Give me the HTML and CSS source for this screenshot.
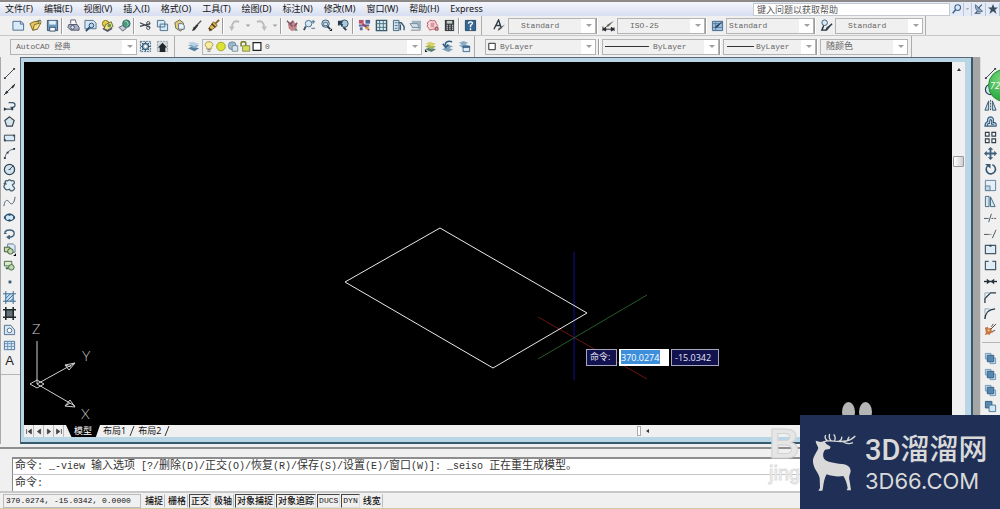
FILE: index.html
```html
<!DOCTYPE html>
<html lang="zh-CN">
<head>
<meta charset="utf-8">
<title>AutoCAD</title>
<link rel="stylesheet" href="styles.css">
</head>
<body>
<svg class="sprite" aria-hidden="true">
  <symbol id="new" viewBox="0 0 14 14"><path d="M1 2.500h8.500l3 2.500v7h-11.500z" fill="#d9eafa" stroke="#47688c"/><path d="M9 2.500v3h3" fill="none" stroke="#47688c"/></symbol>
  <symbol id="open" viewBox="0 0 14 14"><path d="M1 5l4-2 6-1-2 9-5 1z" fill="#e9c65b" stroke="#7a6428"/><path d="M4 12l2-6 7-2-4 7z" fill="#f6df8c" stroke="#7a6428"/><path d="M8 3l4-2 1 2" fill="none" stroke="#4c6b3c"/></symbol>
  <symbol id="save" viewBox="0 0 14 14"><path d="M1.500 1.500h11v11h-11z" fill="#6c9cc0" stroke="#36536e"/><path d="M3.500 2h7v4h-7z" fill="#e6eef5"/><path d="M4 9h6v4H4z" fill="#fff" stroke="#36536e"/></symbol>
  <symbol id="print" viewBox="0 0 14 14"><path d="M4 5V1h5l1 4" fill="#fff" stroke="#555b70"/><path d="M2 6h9l2 3v3H4L1 9z" fill="#aab2c4" stroke="#494f66"/><circle cx="6" cy="9" r="2" fill="#dfe4ee" stroke="#494f66"/></symbol>
  <symbol id="preview" viewBox="0 0 14 14"><path d="M1 1.500h9l3 3v6H1z" fill="#d5e5f2" stroke="#4e7191"/><circle cx="8" cy="7" r="2.500" fill="#b9d8ee" stroke="#274a6a"/><path d="M6 9l-4 4" stroke="#274a6a" stroke-width="2"/></symbol>
  <symbol id="publish" viewBox="0 0 14 14"><circle cx="5" cy="5" r="3.500" fill="#e7cd48" stroke="#7b6d21"/><path d="M5 6l6-3 2 5-6 4-4-1z" fill="#f0e189" stroke="#6c6427"/><circle cx="9" cy="7" r="2" fill="#6a9a4a"/><path d="M2 10l5 3 5-3" stroke="#505470" fill="none" stroke-width="1.500"/></symbol>
  <symbol id="globe" viewBox="0 0 14 14"><circle cx="9" cy="5" r="4" fill="#4a9a80" stroke="#2c6270"/><path d="M7 2l3 1 1 3-2 2" stroke="#a6dca0" fill="none"/><path d="M1 9l4-2 4 3-4 3z" fill="#c5cdd8" stroke="#56606e"/></symbol>
  <symbol id="cut" viewBox="0 0 14 14"><path d="M1 4l11 5M1 8l11-3" stroke="#3f4650" stroke-width="1.300"/><circle cx="10" cy="4.500" r="1.800" fill="none" stroke="#3f4650"/><circle cx="10" cy="9.500" r="1.800" fill="none" stroke="#3f4650"/></symbol>
  <symbol id="copy" viewBox="0 0 14 14"><path d="M1.500 1.500h7l1 1v6h-8zM4.500 5.500h8v7h-8z" fill="#d4e8f7" stroke="#486d8d"/></symbol>
  <symbol id="paste" viewBox="0 0 14 14"><path d="M2 4l5-3 4 3 1 6-4 3-5-3z" fill="#e4cd7d" stroke="#6b6848"/><path d="M6 5h4l2 2v4H6z" fill="#eff6fb" stroke="#547391"/></symbol>
  <symbol id="brush" viewBox="0 0 14 14"><path d="M12 2L6 8" stroke="#555" stroke-width="1.500"/><path d="M8 6l1 1-4 5-3 1 2-4z" fill="#343434"/></symbol>
  <symbol id="paint" viewBox="0 0 14 14"><path d="M13 1L9 5" stroke="#8a5c20" stroke-width="2"/><path d="M7 3l4 4-5 4-3 2-1-3z" fill="#e2b848" stroke="#775923"/><path d="M5 5l4 4M2 10l3 2" stroke="#3d3a35" stroke-width="1.500"/></symbol>
  <symbol id="undo" viewBox="0 0 14 14"><path d="M12 3C7 1 4 4 4 10" fill="none" stroke="#b8bbc0" stroke-width="2"/><path d="M1 8h6l-3 5z" fill="#b8bbc0"/></symbol>
  <symbol id="redo" viewBox="0 0 14 14"><path d="M2 3c5-2 8 1 8 7" fill="none" stroke="#b8bbc0" stroke-width="2"/><path d="M7 8h6l-3 5z" fill="#b8bbc0"/></symbol>
  <symbol id="caret" viewBox="0 0 8 14"><path d="M1.500 6h5L4 8.500z" fill="#9da2aa"/></symbol>
  <symbol id="pan" viewBox="0 0 14 14"><path d="M2 5l5-3 5 4-1 6-5 1-3-3z" fill="#c3848a"/><path d="M1 2l6 6M8 2l-3 3M12 4L9 8" stroke="#7b5362" stroke-width="1.500"/><path d="M10 10l3 2-3 1z" fill="#458c74"/></symbol>
  <symbol id="zoomrt" viewBox="0 0 14 14"><circle cx="6" cy="5" r="3.500" fill="#d3eaf6" stroke="#466d83"/><path d="M3 8l-2 4" stroke="#365169" stroke-width="2"/><path d="M11 1v4M9 3h4M9 10h4" stroke="#3b6a88"/></symbol>
  <symbol id="zoomwin" viewBox="0 0 14 14"><circle cx="6" cy="5" r="4" fill="#b8d1e2" stroke="#3c5c75"/><path d="M4 4h4v3H4z" fill="#eaf2f7" stroke="#54738a"/><path d="M8 8l3 3" stroke="#27394b" stroke-width="2"/><path d="M13 10v3h-3z" fill="#222"/></symbol>
  <symbol id="zoomprev" viewBox="0 0 14 14"><circle cx="8" cy="5" r="4" fill="#a9c9dd" stroke="#334f65"/><path d="M6 7L2 3M2 7V3h4M7 9l3 3" fill="none" stroke="#273d4f" stroke-width="2"/></symbol>
  <symbol id="props" viewBox="0 0 14 14"><path d="M1 1h5v4H1z" fill="#ba5369"/><path d="M8 1h5v4H8z" fill="#4f67a0"/><path d="M1 6h11v2H1zM2 9h3v3H2z" fill="#5969a0"/><path d="M5 5l7 7" stroke="#a64256" stroke-width="2"/><path d="M8 10h4" stroke="#d2af4e" stroke-width="2"/></symbol>
  <symbol id="dcenter" viewBox="0 0 14 14"><path d="M1.500 1.500h11v11h-11z" fill="#d6e8ee" stroke="#3b5b6a" stroke-width="1.500"/><path d="M5 2v10M9 2v10M2 5h10M2 9h10" stroke="#477080"/></symbol>
  <symbol id="palette" viewBox="0 0 14 14"><path d="M1.500 1.500h6v11h-6z" fill="#d2e4f0" stroke="#41647f"/><path d="M3 4h3M3 7h3M3 10h3" stroke="#456c8a"/><path d="M7 4h3l3 4v4M9 6v6" fill="none" stroke="#365977" stroke-width="1.500"/></symbol>
  <symbol id="sheet" viewBox="0 0 14 14"><path d="M3 2h10v10L9 10H3z" fill="#9fb3c0"/><path d="M1 5h8l2 4H4z" fill="#d7e3ea" stroke="#718d9e"/><path d="M2 12h10" stroke="#6f828f"/></symbol>
  <symbol id="markup" viewBox="0 0 14 14"><path d="M3 3q1-3 4-1 4-1 4 3 3 2 0 4-1 3-4 2-4 2-4-1Q0 8 2 6 0 4 3 3z" fill="#f7dadd" stroke="#b94c5c"/><path d="M5 4h4v5H5z" fill="#d995a0"/><path d="M10 9h3v3h-3z" fill="#d9a6a6" stroke="#924653"/></symbol>
  <symbol id="calc" viewBox="0 0 14 14"><path d="M2 1h10v12H2z" fill="#383b3e"/><path d="M4 2h6v3H4z" fill="#c3c8c9"/><path d="M4 7h1M7 7h1M10 7h1M4 9h1M7 9h1M10 9h1M4 11h1M7 11h1M10 11h1" stroke="#eee" stroke-width="1.500"/></symbol>
  <symbol id="help" viewBox="0 0 14 14"><path d="M1.500 1.500h11v11h-11z" fill="#356993" stroke="#234764"/><path d="M5 5c0-3 5-2 4 0L7 7v2M7 10v2" fill="none" stroke="#fff" stroke-width="1.500"/></symbol>
  <symbol id="gear" viewBox="0 0 14 14"><path d="M1.500 1.500h11v11h-11z" fill="#d7e6ef" stroke="#4c6a82" stroke-dasharray="2 1"/><circle cx="7" cy="7" r="3.500" fill="#8eabc0" stroke="#274b68"/><circle cx="7" cy="7" r="1.500" fill="#fff"/><path d="M7 2v2M7 10v2M2 7h2M10 7h2M3 3l2 2M9 9l2 2M3 11l2-2M9 5l2-2" stroke="#274b68"/></symbol>
  <symbol id="home" viewBox="0 0 14 14"><path d="M1.500 1.500h11v11h-11z" fill="#d3d9dd" stroke="#929ea6" stroke-dasharray="2 1"/><path d="M7 3l5 5h-2v5H4V8H2z" fill="#21262b"/></symbol>
  <symbol id="layers" viewBox="0 0 14 14"><path d="M1 9l5-2 7 2-5 3z" fill="#537f9f"/><path d="M1 6l5-2 7 2-5 3z" fill="#86aeca"/><path d="M1 3l5-1 7 2-5 3z" fill="#b9d3e4"/></symbol>
  <symbol id="layery" viewBox="0 0 14 14"><path d="M1 10l5-2 7 2-5 3z" fill="#587f78"/><path d="M1 7l5-2 7 2-5 3z" fill="#a3b653"/><path d="M2 4l4-2 7 2-5 3z" fill="#d8cf69"/><path d="M1 10l3 3H1z" fill="#222"/></symbol>
  <symbol id="layerprev" viewBox="0 0 14 14"><path d="M1 10l5-2 7 2-5 3zM4 6l4-1 5 2-5 2z" fill="#7a9fba"/><path d="M12 2C7 0 4 3 5 6M2 4l3 4 3-3" fill="none" stroke="#345d86" stroke-width="1.700"/></symbol>
  <symbol id="layerwin" viewBox="0 0 14 14"><path d="M1 3l5-2 5 2-5 3zM1 6l5-2 5 2-5 3z" fill="#8aadc4"/><path d="M5.500 6.500h7v6h-7z" fill="#dcecf7" stroke="#3c688e"/><path d="M5 7.500h8" stroke="#3c688e" stroke-width="2"/></symbol>
  <symbol id="dstyle" viewBox="0 0 14 14"><path d="M1 11L6 1l3 9M3 7h5" fill="none" stroke="#303b45" stroke-width="1.500"/><path d="M13 6l-5 5-3 2 1-3z" fill="#555"/></symbol>
  <symbol id="dimstyle" viewBox="0 0 14 14"><path d="M1 8v5M13 9v4M1 11h12M1 11l3-2v4zM13 11l-3-2v4z" fill="#26282c" stroke="#26282c"/><path d="M13 2L7 8l-3 1 2-3z" fill="#596b51"/></symbol>
  <symbol id="tablestyle" viewBox="0 0 14 14"><path d="M1.500 2.500h11v10h-11z" fill="#9dbfdc" stroke="#41658a"/><path d="M2 5h10M5 3v9M2 9h10" stroke="#527ca0"/><path d="M13 2L7 9l-3 1 2-3z" fill="#243d56"/></symbol>
  <symbol id="mleader" viewBox="0 0 14 14"><circle cx="5" cy="4" r="3" fill="#d8eaf5" stroke="#375873"/><path d="M4 7l-2 5h4l7-7" fill="none" stroke="#26323a" stroke-width="1.500"/><path d="M13 5l-5 7-2 1 1-4z" fill="#33434f"/></symbol>
  <symbol id="bulb" viewBox="0 0 14 14"><path d="M4 8C0 4 3 1 7 1s7 3 3 7v2H4z" fill="#f8eca0" stroke="#9b873d"/><path d="M5 11h4M5 13h4" stroke="#636363"/></symbol>
  <symbol id="sun" viewBox="0 0 14 14"><circle cx="7" cy="7" r="5.500" fill="#dce333" stroke="#8d931d"/></symbol>
  <symbol id="vpsun" viewBox="0 0 14 14"><circle cx="6" cy="6" r="5" fill="#9cbacd" stroke="#5f7e91"/><path d="M6 6h7v7H6z" fill="#d9e6ed" stroke="#657f8c"/></symbol>
  <symbol id="lock" viewBox="0 0 14 14"><path d="M2 7V3c0-3 6-3 6 0v3" fill="none" stroke="#767e34" stroke-width="2"/><path d="M4 6h9v7H4z" fill="#d5dc62" stroke="#757a2a"/></symbol>
  <symbol id="square" viewBox="0 0 14 14"><path d="M2 2h10v10H2z" fill="#fff" stroke="#222" stroke-width="1.500"/></symbol>
  <symbol id="lens" viewBox="0 0 14 14"><circle cx="8" cy="5" r="4" fill="#d6e8f9" stroke="#41648d" stroke-width="1.500"/><path d="M5 8l-4 5" stroke="#41648d" stroke-width="2"/></symbol>
  <symbol id="dish" viewBox="0 0 14 14"><path d="M2 1l10 9c-5 3-11-1-10-9z" fill="#8faac3" stroke="#36506d"/><path d="M6 6l5-5M5 10l-3 3h7" fill="none" stroke="#36506d" stroke-width="1.500"/></symbol>
  <symbol id="star" viewBox="0 0 14 14"><path d="M7 0l2 5h5l-4 3 2 6-5-4-5 4 2-6-4-3h5z" fill="#3b4e60"/></symbol>
  <symbol id="line" viewBox="0 0 14 14"><path d="M2 12L12 2" stroke="#333e48"/><path d="M1 11h2v2H1zM11 1h2v2h-2z" fill="#333e48"/></symbol>
  <symbol id="xline" viewBox="0 0 14 14"><path d="M1 13L13 1" stroke="#26313a"/><path d="M4 8l2 2-3 2-1-1zM10 3l3-2-1 3-2 2-1-1z" fill="#26313a"/></symbol>
  <symbol id="pline" viewBox="0 0 14 14"><path d="M1 11h9M6 4h4c4 0 4 5 0 5H8" fill="none" stroke="#3d5871" stroke-width="1.300"/><path d="M1 9l3 2-3 2zM9 9h2v3H9z" fill="#263947"/></symbol>
  <symbol id="poly" viewBox="0 0 14 14"><path d="M7 2l5 4-2 6H4L2 6z" fill="#d4e5ef" stroke="#39444d" stroke-width="1.300"/></symbol>
  <symbol id="rect" viewBox="0 0 14 14"><path d="M1.500 4.500h11v6h-11z" fill="#d7eaf7" stroke="#37434d"/><path d="M1 9h2v2H1zM11 4h2v2h-2z" fill="#37434d"/></symbol>
  <symbol id="arc" viewBox="0 0 14 14"><path d="M2 12Q3 4 12 2" fill="none" stroke="#4d6579"/><path d="M1 11h2v2H1zM4 5h2v2H4zM11 1h2v2h-2z" fill="#26313a"/></symbol>
  <symbol id="circle" viewBox="0 0 14 14"><circle cx="7" cy="7" r="5.500" fill="#cfe2ed" stroke="#2d4355" stroke-width="1.300"/><path d="M7 7l4-4M6 7h2" stroke="#2d4355"/></symbol>
  <symbol id="cloud" viewBox="0 0 14 14"><path d="M3 5Q1 1 5 2q2-2 4 0 4-1 3 3-3 1-1 3 3 2 0 4-3 2-4-1-4 2-5-1-2-2 0-4-2-2 1-1z" fill="#e3eff5" stroke="#40596c" stroke-width="1.300"/></symbol>
  <symbol id="spline" viewBox="0 0 14 14"><path d="M1 12C2 4 5 5 7 8s5 2 6-6" fill="none" stroke="#40556a"/></symbol>
  <symbol id="ellipse" viewBox="0 0 14 14"><ellipse cx="7" cy="7" rx="5" ry="3.500" fill="#d1e9f7" stroke="#284e6c" stroke-width="1.500"/><path d="M1 7h2M11 7h2M7 3v2M7 9v2" stroke="#284e6c" stroke-width="2"/></symbol>
  <symbol id="earc" viewBox="0 0 14 14"><path d="M2 7C2 2 12 2 12 7c0 3-3 4-6 4" fill="none" stroke="#42627b" stroke-width="1.500"/><path d="M1 7h3M7 9l-3 2 3 2z" fill="#42627b" stroke="#42627b"/></symbol>
  <symbol id="insert" viewBox="0 0 14 14"><path d="M5 1h6l2 2v7H5z" fill="#dcebf4" stroke="#5c7d97"/><path d="M1.500 4.500h6v5h-6z" fill="#c9dcaa" stroke="#35583a"/><circle cx="8" cy="9" r="3" fill="#c3d8a5" stroke="#35583a"/><path d="M14 11v3h-3z"/></symbol>
  <symbol id="block" viewBox="0 0 14 14"><path d="M1.500 2.500h8v5h-8z" fill="#dae9cb" stroke="#3e683f"/><circle cx="9" cy="9" r="3" fill="#bed6ae" stroke="#3e683f"/><path d="M3 10h3" stroke="#3e683f" stroke-width="2"/></symbol>
  <symbol id="point" viewBox="0 0 14 14"><path d="M6 6h3v3H6z" fill="#345674"/></symbol>
  <symbol id="hatch" viewBox="0 0 14 14"><path d="M2 3h10v9H2z" fill="#c5e2f3"/><path d="M3 0v14M11 0v14M0 3h14M0 11h14M3 8l5-5M4 11l7-7M8 11l3-3" stroke="#36668c"/></symbol>
  <symbol id="grad" viewBox="0 0 14 14"><path d="M3 3h8v8H3z" fill="#637279"/><path d="M3 0v14M11 0v14M0 3h14M0 11h14" stroke="#20282c" stroke-width="1.700"/></symbol>
  <symbol id="region" viewBox="0 0 14 14"><path d="M1.500 2.500h7l4 5v5h-11z" fill="#d5e7f3" stroke="#4c6e8b"/><circle cx="7" cy="8" r="2.500" fill="#fff" stroke="#4c6e8b"/></symbol>
  <symbol id="table" viewBox="0 0 14 14"><path d="M1.500 2.500h11v9h-11z" fill="#d8eaf8" stroke="#47719b"/><path d="M2 5h10M2 8h10M5 3v8M9 3v8" stroke="#6a91b4"/></symbol>
  <symbol id="mirror" viewBox="0 0 14 14"><path d="M5 2v10H1zM9 2v10h4z" fill="#c5d9e6" stroke="#34536a"/><path d="M7 1v12" stroke="#34536a" stroke-dasharray="2 1"/></symbol>
  <symbol id="offset" viewBox="0 0 14 14"><path d="M1 12h12q1-4-3-4 1-6-3-6-4 1-3 5-3 1-3 5zM4 12q-1-3 2-3 0-4 1-4 2 0 1 5h3" fill="#c3ddef" stroke="#395e7b" stroke-width="1.200"/></symbol>
  <symbol id="array" viewBox="0 0 14 14"><path d="M1.500 1.500h4v4h-4zM8.500 1.500h4v4h-4zM1.500 8.500h4v4h-4zM8.500 8.500h4v4h-4z" fill="#eef4f8" stroke="#333e47" stroke-width="1.200"/></symbol>
  <symbol id="move" viewBox="0 0 14 14"><path d="M7 0l3 3H8v3h3V4l3 3-3 3V8H8v3h2l-3 3-3-3h2V8H3v2L0 7l3-3v2h3V3H4z" fill="#3f617c"/></symbol>
  <symbol id="rotate" viewBox="0 0 14 14"><path d="M4 3a5 5 0 1 0 5-1" fill="none" stroke="#355675" stroke-width="1.700"/><path d="M1 1h6v5z" fill="#355675"/></symbol>
  <symbol id="scale" viewBox="0 0 14 14"><path d="M1.500 1.500h11v11h-11z" fill="#e4eff7" stroke="#607f99"/><path d="M1.500 7.500h5v5h-5z" fill="#bed7e8" stroke="#607f99"/></symbol>
  <symbol id="stretch" viewBox="0 0 14 14"><path d="M1.500 1.500h4v11h-4zM7 2l5 10.500H7z" fill="#d7e7f2" stroke="#426580"/></symbol>
  <symbol id="trim" viewBox="0 0 14 14"><path d="M0 8h5M5 12l3-9" stroke="#43515b"/><path d="M8 8h6" stroke="#43515b" stroke-dasharray="2 1"/></symbol>
  <symbol id="extend" viewBox="0 0 14 14"><path d="M0 8h5" stroke="#43515b"/><path d="M5 8h4" stroke="#43515b" stroke-dasharray="1 1"/><path d="M9 12l4-9" stroke="#43515b"/></symbol>
  <symbol id="break1" viewBox="0 0 14 14"><path d="M1.500 2.500h11v9h-11z" fill="#e0edf6" stroke="#455a6a" stroke-width="1.300"/><path d="M6 2h2v2H6z" fill="#233b4c"/></symbol>
  <symbol id="break2" viewBox="0 0 14 14"><path d="M5 2.500H1.500v9h11v-9H9" fill="#e0edf6" stroke="#455a6a" stroke-width="1.300"/></symbol>
  <symbol id="join" viewBox="0 0 14 14"><path d="M0 7h14" stroke="#25323b" stroke-width="1.500"/><path d="M3 4l4 3-4 3zM11 4L7 7l4 3z" fill="#25323b"/></symbol>
  <symbol id="chamfer" viewBox="0 0 14 14"><path d="M1 13V8l6-6h6" fill="none" stroke="#283d4e" stroke-width="1.400"/><path d="M1 7V2h5" fill="none" stroke="#82a6c0"/></symbol>
  <symbol id="fillet" viewBox="0 0 14 14"><path d="M1 13Q1 3 12 2" fill="none" stroke="#283d4e" stroke-width="1.500"/><path d="M1 7V2h5" fill="none" stroke="#82a6c0"/></symbol>
  <symbol id="explode" viewBox="0 0 14 14"><path d="M1 5l3-1 1 2 3-1v3l2 2-3 1-1 2-2-1-3 1 1-3z" fill="#c67545"/><path d="M7 7l6-6M9 9l3-1M8 4l2-3" stroke="#513c30"/><path d="M4 7h2v2H4z" fill="#f4d086"/></symbol>
  <symbol id="ordera" viewBox="0 0 14 14"><path d="M1.500 1.500h6v6h-6zM6.500 6.500h6v6h-6z" fill="#c6e0f1" stroke="#6d97b6"/><path d="M3.500 3.500h7v7h-7z" fill="#5787ae" stroke="#345f83"/></symbol>
  <symbol id="orderb" viewBox="0 0 14 14"><path d="M1.500 1.500h7v7h-7z" fill="#5989af" stroke="#355f83"/><path d="M5.500 5.500h7v7h-7z" fill="#cfe6f4" stroke="#4d7798"/></symbol>
</svg>

<div class="app">
  <header class="menubar">
    <nav class="menus" aria-label="菜单">
      <button>文件(F)</button><button>编辑(E)</button><button>视图(V)</button><button>插入(I)</button><button>格式(O)</button><button>工具(T)</button><button>绘图(D)</button><button>标注(N)</button><button>修改(M)</button><button>窗口(W)</button><button>帮助(H)</button><button>Express</button>
    </nav>
    <div class="search">
      <input type="text" aria-label="搜索帮助" placeholder="键入问题以获取帮助">
      <button aria-label="搜索"><svg><use href="#lens"/></svg></button>
      <button class="slim" aria-label="搜索选项"><svg><use href="#caret"/></svg></button>
      <button aria-label="通讯中心"><svg><use href="#dish"/></svg></button>
      <button aria-label="收藏夹"><svg><use href="#star"/></svg></button>
    </div>
  </header>

  <div class="toolrow">
    <div class="toolbar standard">
      <button aria-label="新建"><svg><use href="#new"/></svg></button><button aria-label="打开"><svg><use href="#open"/></svg></button><button aria-label="保存"><svg><use href="#save"/></svg></button>
      <i class="sep"></i>
      <button aria-label="打印"><svg><use href="#print"/></svg></button><button aria-label="打印预览"><svg><use href="#preview"/></svg></button><button aria-label="发布"><svg><use href="#publish"/></svg></button><button aria-label="三维 DWF"><svg><use href="#globe"/></svg></button>
      <i class="sep"></i>
      <button aria-label="剪切"><svg><use href="#cut"/></svg></button><button aria-label="复制"><svg><use href="#copy"/></svg></button><button aria-label="粘贴"><svg><use href="#paste"/></svg></button><button aria-label="特性匹配"><svg><use href="#brush"/></svg></button><button aria-label="块编辑器"><svg><use href="#paint"/></svg></button>
      <i class="sep"></i>
      <button aria-label="放弃"><svg><use href="#undo"/></svg></button><button class="slim" aria-label="放弃列表"><svg><use href="#caret"/></svg></button><button aria-label="重做"><svg><use href="#redo"/></svg></button><button class="slim" aria-label="重做列表"><svg><use href="#caret"/></svg></button>
      <i class="sep"></i>
      <button aria-label="平移"><svg><use href="#pan"/></svg></button><button aria-label="实时缩放"><svg><use href="#zoomrt"/></svg></button><button aria-label="窗口缩放"><svg><use href="#zoomwin"/></svg></button><button aria-label="缩放上一个"><svg><use href="#zoomprev"/></svg></button>
      <i class="sep"></i>
      <button aria-label="特性"><svg><use href="#props"/></svg></button><button aria-label="设计中心"><svg><use href="#dcenter"/></svg></button><button aria-label="工具选项板"><svg><use href="#palette"/></svg></button><button aria-label="图纸集"><svg><use href="#sheet"/></svg></button><button aria-label="标记集"><svg><use href="#markup"/></svg></button><button aria-label="计算器"><svg><use href="#calc"/></svg></button>
      <i class="sep"></i>
      <button aria-label="帮助"><svg><use href="#help"/></svg></button>
    </div>
    <div class="toolbar styles">
      <button aria-label="文字样式"><svg><use href="#dstyle"/></svg></button>
      <span class="combo style-combo"><select aria-label="文字样式"><option>Standard</option></select></span><i class="sep"></i>
      <button aria-label="标注样式"><svg><use href="#dimstyle"/></svg></button>
      <span class="combo style-combo"><select aria-label="标注样式"><option>ISO-25</option></select></span><i class="sep"></i>
      <button aria-label="表格样式"><svg><use href="#tablestyle"/></svg></button>
      <span class="combo style-combo near"><select aria-label="表格样式"><option>Standard</option></select></span><i class="sep"></i>
      <button aria-label="引线样式"><svg><use href="#mleader"/></svg></button>
      <span class="combo style-combo"><select aria-label="引线样式"><option>Standard</option></select></span>
    </div>
  </div>

  <div class="toolrow">
    <div class="toolbar workspace-bar">
      <span class="combo workspace-combo"><select aria-label="工作空间"><option>AutoCAD 经典</option></select></span>
      <button aria-label="工作空间设置"><svg><use href="#gear"/></svg></button><button aria-label="我的工作空间"><svg><use href="#home"/></svg></button>
    </div>
    <div class="toolbar layer-bar">
      <button aria-label="图层特性"><svg><use href="#layers"/></svg></button>
      <span class="combo layer-combo"><span class="lead"><svg><use href="#bulb"/></svg><svg><use href="#sun"/></svg><svg><use href="#vpsun"/></svg><svg><use href="#lock"/></svg><svg><use href="#square"/></svg></span><select aria-label="图层"><option>0</option></select></span>
      <button aria-label="置为当前图层"><svg><use href="#layery"/></svg></button><button aria-label="上一个图层"><svg><use href="#layerprev"/></svg></button><button aria-label="图层状态"><svg><use href="#layerwin"/></svg></button>
    </div>
    <div class="toolbar props-bar">
      <span class="combo color-combo"><span class="lead"><svg><use href="#square"/></svg></span><select aria-label="颜色"><option>ByLayer</option></select></span><i class="sep"></i>
      <span class="combo type-combo"><span class="lead"><i class="rule"></i></span><select aria-label="线型"><option>ByLayer</option></select></span><i class="sep"></i>
      <span class="combo weight-combo"><span class="lead"><i class="rule"></i></span><select aria-label="线宽"><option>ByLayer</option></select></span><i class="sep"></i>
      <span class="combo plot-combo"><select aria-label="打印样式"><option>随颜色</option></select></span>
    </div>
  </div>

  <main class="workspace">
    <aside class="sidebar" aria-label="绘图">
      <button aria-label="直线"><svg><use href="#line"/></svg></button><button aria-label="构造线"><svg><use href="#xline"/></svg></button><button aria-label="多段线"><svg><use href="#pline"/></svg></button><button aria-label="正多边形"><svg><use href="#poly"/></svg></button><button aria-label="矩形"><svg><use href="#rect"/></svg></button><button aria-label="圆弧"><svg><use href="#arc"/></svg></button><button aria-label="圆"><svg><use href="#circle"/></svg></button><button aria-label="修订云线"><svg><use href="#cloud"/></svg></button><button aria-label="样条曲线"><svg><use href="#spline"/></svg></button><button aria-label="椭圆"><svg><use href="#ellipse"/></svg></button><button aria-label="椭圆弧"><svg><use href="#earc"/></svg></button><button aria-label="插入块"><svg><use href="#insert"/></svg></button><button aria-label="创建块"><svg><use href="#block"/></svg></button><button aria-label="点"><svg><use href="#point"/></svg></button><button aria-label="图案填充"><svg><use href="#hatch"/></svg></button><button aria-label="渐变色"><svg><use href="#grad"/></svg></button><button aria-label="面域"><svg><use href="#region"/></svg></button><button aria-label="表格"><svg><use href="#table"/></svg></button><button class="mtext" aria-label="多行文字">A</button>
      <i class="rest"></i>
    </aside>

    <section class="window">
      <div class="view">
        <div class="canvas">
          <svg class="drawing" viewBox="0 0 928 363" fill="none">
            <path d="M550 190v128" stroke="#07074a" stroke-width="2"/>
            <path d="M514 255l109 62" stroke="#6b1414"/>
            <path d="M623 233l-109 64" stroke="#245c2b"/>
            <path d="M416 166l147 85-94 55-148-86z" stroke="#e8e8e8"/>
            <g stroke="#d0d0d0">
              <path d="M13 279v43l38-21M13 322l38 22M6 322l7-4 7 4-7 4z"/>
              <path d="M51 301l-6 7-4-5zM41 303l6 2M51 345l-10-1 5-6zM41 344l5-3"/>
            </g>
            <g class="axis-name"><text x="8" y="272">Z</text><text x="58" y="299">Y</text><text x="57" y="357">X</text></g>
          </svg>
          <div class="dynamic">
            <label for="dyn-x">命令:</label>
            <span class="field"><input id="dyn-x" type="text" value="370.0274"></span>
            <input class="second" aria-label="Y" type="text" value="-15.0342">
          </div>
        </div>
        <div class="vscroll"><button aria-label="向上滚动"></button><i class="thumb"></i></div>
      </div>
      <div class="tabs">
        <div class="pager">
          <button aria-label="第一个"><svg viewBox="0 0 10 10"><path d="M2 2v6M8 2L4 5l4 3z"/></svg></button><button aria-label="上一个"><svg viewBox="0 0 10 10"><path d="M7 2L3 5l4 3z"/></svg></button><button aria-label="下一个"><svg viewBox="0 0 10 10"><path d="M3 2l4 3-4 3z"/></svg></button><button aria-label="最后一个"><svg viewBox="0 0 10 10"><path d="M8 2v6M2 2l4 3-4 3z"/></svg></button>
        </div>
        <button class="tab current">模型</button>
        <button class="tab">布局1</button><svg class="slash" viewBox="0 0 6 12"><path d="M5 1L1 11"/></svg>
        <button class="tab">布局2</button><svg class="slash" viewBox="0 0 6 12"><path d="M5 1L1 11"/></svg>
        <div class="hscroll"><i class="split"></i><button aria-label="向左滚动"></button></div>
      </div>
    </section>

    <aside class="sidebar modify" aria-label="修改">
      <button aria-label="删除"><svg><use href="#line"/></svg></button><button aria-label="复制对象"><svg><use href="#circle"/></svg></button><button aria-label="镜像"><svg><use href="#mirror"/></svg></button><button aria-label="偏移"><svg><use href="#offset"/></svg></button><button aria-label="阵列"><svg><use href="#array"/></svg></button><button aria-label="移动"><svg><use href="#move"/></svg></button><button aria-label="旋转"><svg><use href="#rotate"/></svg></button><button aria-label="缩放"><svg><use href="#scale"/></svg></button><button aria-label="拉伸"><svg><use href="#stretch"/></svg></button><button aria-label="修剪"><svg><use href="#trim"/></svg></button><button aria-label="延伸"><svg><use href="#extend"/></svg></button><button aria-label="打断于点"><svg><use href="#break1"/></svg></button><button aria-label="打断"><svg><use href="#break2"/></svg></button><button aria-label="合并"><svg><use href="#join"/></svg></button><button aria-label="倒角"><svg><use href="#chamfer"/></svg></button><button aria-label="圆角"><svg><use href="#fillet"/></svg></button><button aria-label="分解"><svg><use href="#explode"/></svg></button>
      <i class="divider"></i>
      <button aria-label="前置"><svg><use href="#ordera"/></svg></button><button aria-label="后置"><svg><use href="#ordera"/></svg></button><button aria-label="置于对象之上"><svg><use href="#ordera"/></svg></button><button aria-label="置于对象之下"><svg><use href="#orderb"/></svg></button>
      <span class="badge">72</span>
    </aside>
  </main>

  <section class="command">
    <div class="log"><span>命令</span>: _-view <span>输入选项</span> [?/<span>删除</span>(D)/<span>正交</span>(O)/<span>恢复</span>(R)/<span>保存</span>(S)/<span>设置</span>(E)/<span>窗口</span>(W)]: _seiso <span>正在重生成模型。</span></div>
    <div class="prompt"><label for="cmd"><span>命令</span>:</label><input id="cmd" type="text"></div>
  </section>

  <footer class="status">
    <output>370.0274, -15.0342, 0.0000</output>
    <button>捕捉</button><button>栅格</button><button class="on">正交</button><button>极轴</button><button class="on">对象捕捉</button><button class="on">对象追踪</button><button class="on latin">DUCS</button><button class="on latin">DYN</button><button>线宽</button>
  </footer>

  <div class="watermark"><i class="paw"></i><i class="paw"></i><b>B</b><span>jing</span></div>
  <div class="brand">
    <svg viewBox="575 125 135 178"><path fill="#d9d9d9" d="M586 150l14 4 12-2 6 8 13 8-3 7-14 2c-6 8-8 19-2 28 8 10 28 12 53 15 17 2 26 9 26 22-2 10-7 16-3 30l4 27h-13l3-7c-2-12-6-26-13-36-15 3-34 1-50-5-7 12-9 25-11 40l-2 9h-12l5-8-1-30c-4-17-18-27-20-47-2-17 12-30 16-43-2-8-8-14-8-22z"/><path fill="none" stroke="#d9d9d9" stroke-width="4" d="M609 154c16-10 42 3 69-3 12-2 20-8 27-15M621 150q-10-7-5-17M632 150q-8-8-4-20M642 151q6-10-2-20M653 153q13-4 11-15M669 153q12 10 29 3M683 150q-2-6 4-12"/></svg>
    <div><strong>3D溜溜网</strong><span>3D66.COM</span></div>
  </div>
</div>
</body>
</html>
```
FILE: styles.css
```css
* { box-sizing: border-box; }
body {
  margin: 0;
  background: #f1f0f0;
  color: #222;
  font: 9px/12px "Noto Sans", "Noto Sans CJK SC", sans-serif;
}
button, input, select { font: inherit; color: inherit; margin: 0; padding: 0; border: 0; background: none; }
button { display: flex; align-items: center; justify-content: center; flex: none; }
i { display: block; flex: none; }
.sprite { position: absolute; width: 0; height: 0; }
.app { position: relative; display: flex; flex-direction: column; min-height: 100vh; overflow: hidden; }

.menubar { display: flex; justify-content: space-between; height: 16px; border-top: 2px solid #8d8989; background: linear-gradient(#f4f6fc, #d7def0); }
.menus { display: flex; gap: 11px; padding-left: 5px; color: #151515; }
.search { display: flex; align-items: center; background: #e4ebf6; }
.search input { width: 197px; height: 13px; padding-left: 3px; border: 1px solid #c4c8cf; background: #fff; }
.search input::placeholder { color: #555; opacity: 1; }
.search button { width: 14px; height: 13px; border-right: 1px solid #b9c4d6; }
.search .slim { width: 8px; }
.search svg { width: 10px; height: 10px; }

.toolrow { display: flex; height: 20px; border-bottom: 1px solid #c6c6c6; background: #f1f0f0; }
.toolrow + .toolrow { height: 21px; border-bottom: 0; }
.toolbar { display: flex; align-items: center; border-right: 1px solid #adadad; }
.toolbar button { width: 17px; height: 18px; }
.toolbar svg { width: 13px; height: 13px; }
.toolbar .slim { width: 10px; }
.toolbar .slim svg { width: 8px; }
.standard { padding: 0 2px 0 10px; }
.sep { width: 4px; height: 16px; border-left: 1px solid #9c9c9c; background: linear-gradient(90deg, #fff 1px, transparent 1px); }
.styles { padding: 0 2px 0 9px; }

.combo { display: grid; grid-template-columns: auto 1fr 13px; align-items: center; flex: none; height: 16px; border: 1px solid #b4b4b4; background: linear-gradient(#fff, #fff) right / 14px 100% no-repeat #f1f0f0; }
.combo select { grid-area: 1 / 1 / 2 / 4; width: 100%; height: 14px; appearance: none; border-radius: 0; color: #666; font: 8px/12px "Liberation Mono", "Noto Sans CJK SC", monospace; }
.combo::after { content: ""; grid-area: 1 / 3; justify-self: center; border: 3px solid transparent; border-top-color: #a0a0a0; border-bottom: 0; pointer-events: none; }
.lead { grid-area: 1 / 1; display: flex; align-items: center; pointer-events: none; }
.rule { height: 1px; background: #333; }
.style-combo { width: 88px; }
.style-combo select { padding-left: 12px; }
.near select { padding-left: 2px; }
.workspace-bar { padding: 0 3px 0 10px; }
.workspace-combo { width: 127px; }
.workspace-combo select { padding-left: 5px; }
.layer-bar { padding: 0 1px 0 10px; }
.layer-combo { width: 220px; }
.layer-combo select { padding-left: 62px; }
.toolbar .layer-combo svg { width: 12px; height: 11px; }
.props-bar { padding: 0 3px 0 10px; }
.color-combo { width: 111px; margin-right: 2px; }
.color-combo select { padding-left: 14px; }
.toolbar .color-combo svg { width: 12px; height: 9px; }
.type-combo { width: 117px; }
.type-combo .rule { width: 44px; margin-left: 2px; }
.type-combo select { padding-left: 50px; }
.weight-combo { width: 93px; }
.weight-combo .rule { width: 27px; margin-left: 3px; }
.weight-combo select { padding-left: 32px; }
.plot-combo { width: 88px; }
.plot-combo select { padding-left: 5px; font-size: 9px; }

.workspace { display: flex; flex: 1; min-height: 0; background: #a5a5a5; }
.sidebar { position: relative; display: flex; flex-direction: column; flex: none; width: 20px; padding-top: 8px; border-left: 1px solid #aaa; background: #f1f0f0; }
.sidebar button { width: 17px; height: 16px; }
.sidebar svg { width: 13px; height: 13px; }
.sidebar .mtext { font: 13px/16px "Liberation Sans", sans-serif; }
.rest { margin-top: 5px; border-top: 1px solid #b5b5b5; flex: 1; }
.modify { padding: 8px 0 0 1px; border-left: 1px solid #ddd; }
.divider { height: 1px; margin: 5px 0 7px; background: #b5b5b5; }
.badge { position: absolute; top: 12px; left: 7px; width: 33px; height: 33px; padding: 10px 0 0 1px; border: 1px solid #278a35; border-radius: 50%; background: radial-gradient(circle at 40% 30%, #7ad77c, #2fae46 65%); color: #fff; font: italic 9px/12px "Open Sans", sans-serif; }

.window { display: flex; flex-direction: column; flex: 1; min-width: 0; margin-right: 7px; border: solid #5a6875; border-width: 1px 2px 2px 1px; border-right-color: #38586b; border-bottom-color: #365a6e; background: #b9d6e6; padding: 4px 6px 5px 3px; }
.view { display: flex; flex: 1; min-height: 0; }
.canvas { position: relative; flex: 1; min-width: 0; background: #000; overflow: hidden; }
.drawing { display: block; width: 928px; height: 363px; }
.axis-name { fill: #c8c8c8; stroke: none; font: 300 14px Lato, sans-serif; }
.dynamic { position: absolute; left: 562px; top: 287px; display: flex; gap: 2px; color: #e4e4f4; font-family: "Open Sans", "Noto Sans CJK SC", sans-serif; }
.dynamic label, .second { height: 17px; border: 1px solid #a7a7bd; background: #12124f; line-height: 14px; }
.dynamic label { width: 31px; padding-left: 3px; }
.dynamic .second { width: 48px; padding-left: 3px; }
.field { width: 50px; height: 17px; padding: 1px 2px; background: #fff; }
.field input { display: block; width: 39px; height: 14px; background: #3d8fdc; color: #fff; }
.vscroll { width: 13px; background: #f1f0f0; }
.vscroll button { width: 13px; height: 14px; }
.vscroll button::before { content: ""; border: 2px solid transparent; border-bottom: 3px solid #333; border-top: 0; }
.thumb { width: 11px; height: 11px; margin: 80px 0 0 1px; border: 1px solid #999; border-radius: 1px; background: linear-gradient(90deg, #fff, #d0d0d0); }

.tabs { display: flex; align-items: center; height: 12px; background: #f1f0f0; }
.pager { display: flex; margin-right: 2px; }
.pager button { width: 10px; height: 12px; border-right: 1px solid #bbb; }
.pager svg { width: 8px; height: 9px; fill: #444; stroke: #444; stroke-width: 1; }
.tab { height: 12px; padding: 0 3px; color: #111; }
.current { width: 34px; padding: 0; background: #000; color: #fff; clip-path: polygon(0 0, 100% 0, 88% 100%, 16% 100%); }
.slash { width: 6px; height: 12px; stroke: #333; fill: none; }
.hscroll { display: flex; align-items: center; width: 328px; margin-left: auto; }
.split { width: 4px; height: 10px; border: 1px solid #aaa; background: #fff; }
.hscroll button { width: 12px; height: 12px; }
.hscroll button::before { content: ""; border: 2px solid transparent; border-right: 3px solid #333; border-left: 0; }

.command { margin-top: 3px; padding: 8px 0 0 12px; border-top: 2px solid #8e8e8e; font: 10px/16px "Liberation Mono", "Noto Sans CJK SC", monospace; color: #333; }
.command span { font-size: 11px; }
.log, .prompt { height: 16px; padding-left: 2px; border-left: 1px solid #888; background: #fff; white-space: nowrap; overflow: hidden; }
.log { height: 18px; border-top: 2px solid #8e8e8e; border-bottom: 1px solid #c4c4c4; line-height: 15px; }
.prompt { display: flex; }
.prompt input { flex: 1; height: 15px; outline: 0; }

.status { display: flex; align-items: center; gap: 1px; height: 19px; padding-left: 3px; border-top: 2px solid #c8c8c8; border-bottom: 2px solid #cfc9a0; color: #111; }
.status output { width: 138px; height: 14px; margin-right: 1px; padding-left: 2px; border: 1px solid #bbb; font: 8px/12px "Liberation Mono", monospace; }
.status button { height: 14px; padding: 0 1px; border: 1px solid transparent; border-right-color: #bbb; font-weight: 500; }
.status .on { border-color: #444 #ddd #ddd #444; }
.status .latin { font: 8px/12px "Liberation Mono", monospace; }

.watermark { position: absolute; right: 127px; bottom: 16px; width: 104px; height: 92px; display: grid; grid-template-columns: 86px 17px; grid-template-rows: 26px 30px 24px; color: #e6e6e6; font-family: "Liberation Sans", sans-serif; -webkit-text-stroke: 1px #d2d2d2; }
.paw { width: 13px; height: 20px; border-radius: 50%; background: #b5b5b5; justify-self: end; }
.watermark b { grid-column: 1 / 3; font-size: 42px; line-height: 32px; }
.watermark span { grid-column: 1 / 3; font-size: 20px; line-height: 30px; color: #f7f7f7; -webkit-text-stroke-color: #ddd; }
.brand { position: absolute; right: 0; bottom: 0; display: flex; gap: 8px; width: 200px; height: 95px; padding: 15px 0 0 12px; background: #1f2f56; color: #d9d9d9; }
.brand svg { width: 45px; height: 60px; flex: none; margin-top: 2px; }
.brand div { display: flex; flex-direction: column; white-space: nowrap; }
.brand strong { font: 500 29px/40px Roboto, "Noto Sans CJK SC", sans-serif; }
.brand span { font: 22px/22px Inter, sans-serif; }
```
